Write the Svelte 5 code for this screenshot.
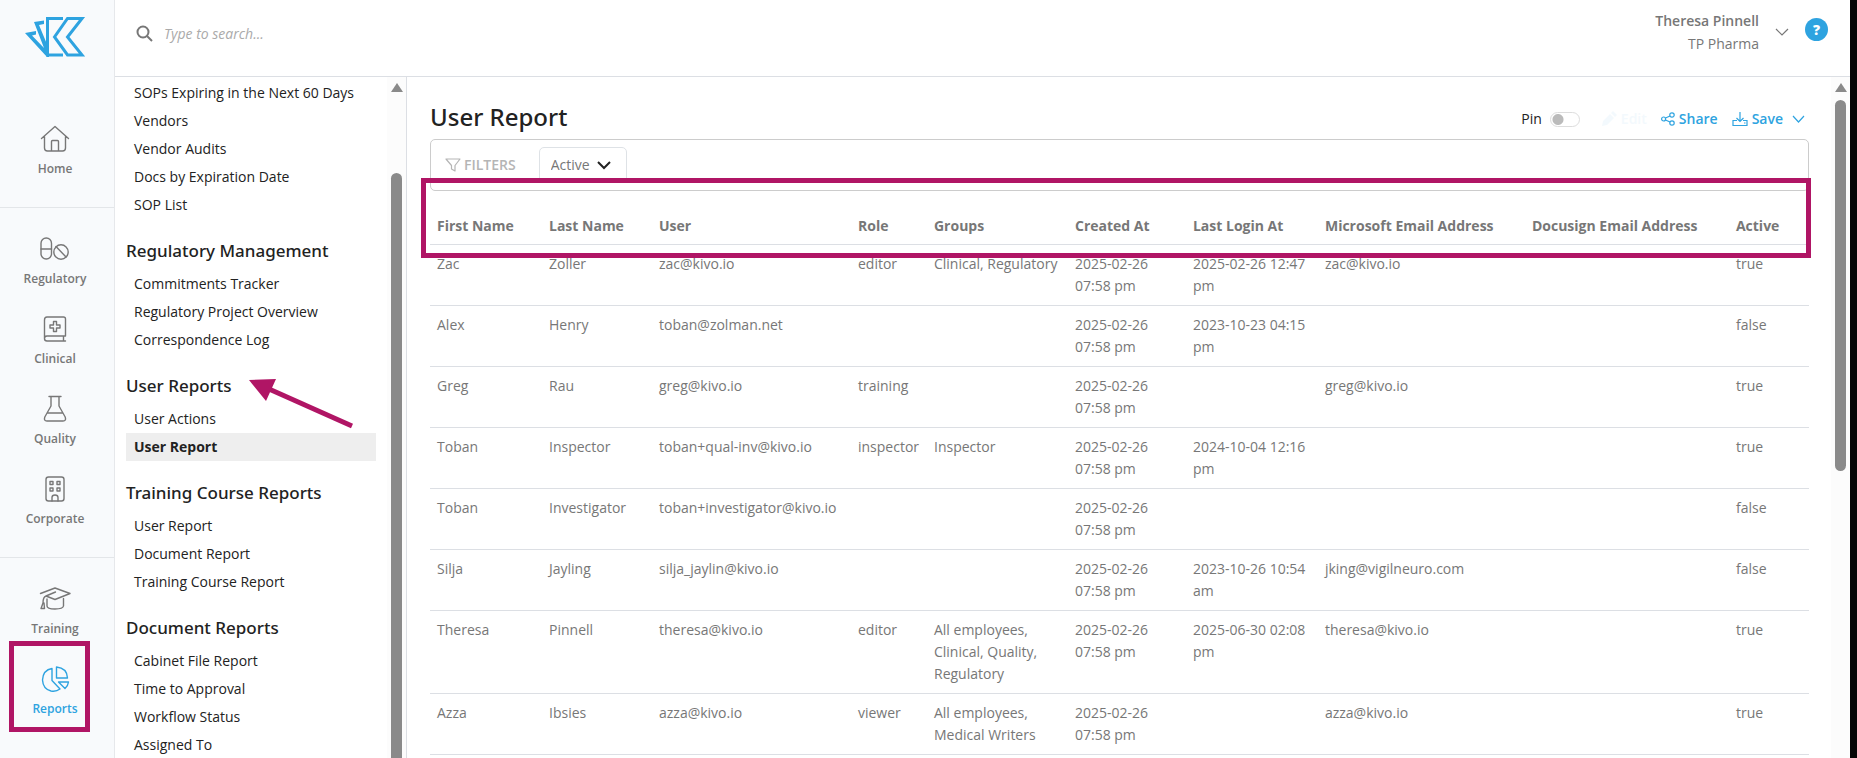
<script>
    let search = '';
    let pinned = false;
    let status = 'Active';

    const navGroups = [
        ['Home'],
        ['Regulatory', 'Clinical', 'Quality', 'Corporate'],
        ['Training', 'Reports']
    ];

    const sections = [
        {
            title: '',
            items: ['SOPs Expiring in the Next 60 Days', 'Vendors', 'Vendor Audits', 'Docs by Expiration Date', 'SOP List']
        },
        {
            title: 'Regulatory Management',
            items: ['Commitments Tracker', 'Regulatory Project Overview', 'Correspondence Log']
        },
        { title: 'User Reports', items: ['User Actions', 'User Report'] },
        {
            title: 'Training Course Reports',
            items: ['User Report', 'Document Report', 'Training Course Report']
        },
        {
            title: 'Document Reports',
            items: ['Cabinet File Report', 'Time to Approval', 'Workflow Status', 'Assigned To']
        }
    ];

    // share = relative width of the column
    const columns = [
        { label: 'First Name', share: 112 },
        { label: 'Last Name', share: 110 },
        { label: 'User', share: 199 },
        { label: 'Role', share: 76 },
        { label: 'Groups', share: 141 },
        { label: 'Created At', share: 118 },
        { label: 'Last Login At', share: 132 },
        { label: 'Microsoft Email Address', share: 207 },
        { label: 'Docusign Email Address', share: 204 },
        { label: 'Active', share: 80 }
    ];
    const total = columns.reduce((sum, c) => sum + c.share, 0);

    const created = '2025-02-26 07:58 pm';
    const rows = [
        ['Zac', 'Zoller', 'zac@kivo.io', 'editor', 'Clinical, Regulatory', created, '2025-02-26 12:47 pm', 'zac@kivo.io', '', 'true'],
        ['Alex', 'Henry', 'toban@zolman.net', '', '', created, '2023-10-23 04:15 pm', '', '', 'false'],
        ['Greg', 'Rau', 'greg@kivo.io', 'training', '', created, '', 'greg@kivo.io', '', 'true'],
        ['Toban', 'Inspector', 'toban+qual-inv@kivo.io', 'inspector', 'Inspector', created, '2024-10-04 12:16 pm', '', '', 'true'],
        ['Toban', 'Investigator', 'toban+investigator@kivo.io', '', '', created, '', '', '', 'false'],
        ['Silja', 'Jayling', 'silja_jaylin@kivo.io', '', '', created, '2023-10-26 10:54 am', 'jking@vigilneuro.com', '', 'false'],
        ['Theresa', 'Pinnell', 'theresa@kivo.io', 'editor', 'All employees, Clinical, Quality, Regulatory', created, '2025-06-30 02:08 pm', 'theresa@kivo.io', '', 'true'],
        ['Azza', 'Ibsies', 'azza@kivo.io', 'viewer', 'All employees, Medical Writers', created, '', 'azza@kivo.io', '', 'true']
    ];
</script>

<div class="app">
    <nav class="rail">
        <a class="logo" href="#home" aria-label="Kivo">
            <svg width="62" height="42" viewBox="24 16 62 42" fill="none" stroke="#2ea3e0" stroke-width="3">
                <path d="M63 18.5H47.5V55H63" />
                <path d="M67.5 18.5H82L67.5 37L82 55H67.5L54.5 37Z" />
                <path fill="#2ea3e0" stroke="none" d="M34 22L44 20.5V24L39 25L49 49V57H47L25 33L36 31V34.5L32 35.5L44 48Z" />
            </svg>
        </a>
        {#each navGroups as group}
            <div class="nav-group">
                {#each group as name}
                    <a class="nav-item" class:current={name === 'Reports'} href="#{name.toLowerCase()}">
                        <svg width="32" height="28" viewBox="0 0 32 28" fill="none" stroke="currentColor" stroke-width="1.4" stroke-linejoin="round" stroke-linecap="round">
                            {#if name === 'Home'}
                                <path d="M2.5 13.5L16 1.5L29.5 13.5M5.5 11.5V23Q5.5 26 8.5 26H23.5Q26.5 26 26.5 23V11.5M12.5 26V16.5Q12.5 15.5 13.5 15.5H18.5Q19.5 15.5 19.5 16.5V26" />
                            {:else if name === 'Regulatory'}
                                <rect x="2" y="3" width="10.5" height="21" rx="5.2" />
                                <path d="M2 14H12.5M17 11.5L27 22" />
                                <circle cx="22" cy="17" r="7.2" />
                            {:else if name === 'Clinical'}
                                <path d="M26.5 21H8Q5.5 21 5.5 23.5M26.5 26H8Q5.5 26 5.5 23.5V5Q5.5 2 8 2H24.5Q26.5 2 26.5 4V21M24.5 21V26" />
                                <path d="M14.5 6.5H17.5V10H21V13H17.5V16.5H14.5V13H11V10H14.5Z" />
                            {:else if name === 'Quality'}
                                <path d="M10 1.5H22M12 1.5V11L5.8 22Q4.5 26 8 26H24Q27.5 26 26.2 22L20 11V1.5M8.5 18H23.5" />
                            {:else if name === 'Corporate'}
                                <rect x="7" y="2" width="18" height="24" rx="2.5" />
                                <path d="M11 6.5H14V9.5H11ZM18 6.5H21V9.5H18ZM11 13H14V16H11ZM18 13H21V16H18ZM13 26V22.5Q13 20 16 20T19 22.5V26" />
                            {:else if name === 'Training'}
                                <path d="M1.5 8.5L16 3L31 8.5L16 14.5L7 11L16.5 7M7 11Q4 12 4 18L2 23.5H5.5L5 18M8 14V21Q8 24 16 24T24.5 21V13.5" />
                            {:else}
                                <path d="M13 3.5V15.5L21 24Q17 27 12 26Q4 24 3.5 15Q4 5 13 3.5Z" />
                                <path d="M17.5 2V13H28.5Q28 3 17.5 2ZM19.5 17H29.5Q29 21 26 23.5Z" />
                            {/if}
                        </svg>
                        <span>{name}</span>
                        {#if name === 'Reports'}
                            <i class="mark"></i>
                        {/if}
                    </a>
                {/each}
            </div>
        {/each}
    </nav>

    <div class="page">
        <header class="topbar">
            <label class="search">
                <svg width="18" height="18" viewBox="0 0 18 18" fill="none" stroke="#777" stroke-width="2">
                    <circle cx="7" cy="7" r="5.5" />
                    <path d="M11 11L16 16" />
                </svg>
                <input type="text" placeholder="Type to search..." aria-label="Search" bind:value={search}>
            </label>
            <div class="account">
                <div class="who">
                    <strong>Theresa Pinnell</strong>
                    <span>TP Pharma</span>
                </div>
                <button class="plain grey" aria-label="Account menu">
                    <svg width="14" height="8" viewBox="0 0 14 8" fill="none" stroke="currentColor" stroke-width="1.2"><path d="M1 1L7 7L13 1" /></svg>
                </button>
                <button class="help">?</button>
            </div>
        </header>

        <div class="body">
            <aside class="sidebar">
                <div class="list">
                    {#each sections as section}
                        {#if section.title}
                            <h2>{section.title}</h2>
                        {/if}
                        {#each section.items as item}
                            <a class:selected={section.title === 'User Reports' && item === 'User Report'} href="#report">{item}</a>
                        {/each}
                        {#if section.title === 'User Reports'}
                            <svg class="arrow" width="106" height="52" viewBox="0 0 106 52">
                                <path d="M20 10L103 47" stroke="#b01565" stroke-width="5" />
                                <path d="M0 1L27 0L17 22Z" fill="#b01565" />
                            </svg>
                        {/if}
                    {/each}
                </div>
                <div class="scroll side-scroll"><b></b><i></i></div>
            </aside>

            <main>
                <div class="title-row">
                    <h1>User Report</h1>
                    <div class="actions">
                        <label class="pin">Pin <input type="checkbox" role="switch" bind:checked={pinned}></label>
                        <button class="plain faded" disabled>
                            <svg width="16" height="16" viewBox="0 0 16 16" fill="currentColor"><path d="M1 15L2 10L9 3L13 7L6 14ZM10 2L12 0L16 4L14 6Z" /></svg>
                            Edit
                        </button>
                        <button class="plain">
                            <svg width="14" height="14" viewBox="0 0 14 14" fill="none" stroke="currentColor" stroke-width="1.2">
                                <circle cx="2.6" cy="7" r="2" /><circle cx="11" cy="3" r="2.2" /><circle cx="11" cy="11" r="2.2" />
                                <path d="M4.5 6L9 4M4.5 8L9 10" />
                            </svg>
                            Share
                        </button>
                        <button class="plain">
                            <svg width="16" height="16" viewBox="0 0 16 16" fill="none" stroke="currentColor" stroke-width="1.2">
                                <path d="M8 1V10M4.5 7L8 10.5L11.5 7M5 9.5H1V14.5H15V9.5H11M12 12H13.5" />
                            </svg>
                            Save
                            <svg class="caret" width="13" height="8" viewBox="0 0 13 8" fill="none" stroke="currentColor" stroke-width="1.2"><path d="M1 1L6.5 7L12 1" /></svg>
                        </button>
                    </div>
                </div>

                <div class="filters">
                    <span class="filters-label">
                        <svg width="16" height="14" viewBox="0 0 16 14" fill="none" stroke="currentColor" stroke-width="1.2" stroke-linejoin="round"><path d="M1 1H15L10 7.5V13L6.5 11V7.5Z" /></svg>
                        FILTERS
                    </span>
                    <span class="picker">
                        <select aria-label="Status" bind:value={status}>
                            <option>Active</option>
                            <option>Inactive</option>
                        </select>
                        <svg width="14" height="9" viewBox="0 0 14 9" fill="none" stroke="#222" stroke-width="2"><path d="M1 1L7 7L13 1" /></svg>
                    </span>
                </div>

                <div class="report">
                    <table>
                        <colgroup>
                            {#each columns as column}
                                <col style:width="{(column.share / total) * 100}%">
                            {/each}
                        </colgroup>
                        <thead>
                            <tr>
                                {#each columns as column}
                                    <th>{column.label}</th>
                                {/each}
                            </tr>
                        </thead>
                        <tbody>
                            {#each rows as row}
                                <tr>
                                    {#each row as cell}
                                        <td>{cell}</td>
                                    {/each}
                                </tr>
                            {/each}
                        </tbody>
                    </table>
                    <i class="mark"></i>
                </div>
            </main>
            <div class="scroll main-scroll"><b></b><i></i></div>
        </div>
    </div>
</div>

<style>
    :global(body) {
        overflow: hidden;
        background: #060606;
    }
    .app {
        display: flex;
        height: 100vh;
        margin-right: 7px;
        background: #fff;
        color: #222;
        font-family: "Open Sans", "Noto Sans", sans-serif;
        font-size: 14px;
        line-height: 22px;
    }
    a {
        color: inherit;
        text-decoration: none;
    }
    button, input, select {
        font: inherit;
        color: inherit;
    }

    /* left rail */
    .rail {
        flex: none;
        box-sizing: border-box;
        width: 115px;
        background: #f8fafc;
        border-right: 1px solid #e6e8eb;
        color: #777;
    }
    .logo {
        display: block;
        height: 81px;
        padding: 16px 0 0 24px;
    }
    .nav-group {
        padding: 14px 0 16px;
    }
    .nav-group + .nav-group {
        border-top: 1px solid #e3e6e9;
        padding-top: 13px;
    }
    .nav-item {
        position: relative;
        display: flex;
        flex-direction: column;
        align-items: center;
        box-sizing: border-box;
        height: 80px;
        width: 110px;
        padding-top: 14px;
        font-size: 12px;
        font-weight: 600;
        line-height: 20px;
        gap: 6px;
    }
    .current {
        color: #2ea3e0;
    }
    .mark {
        position: absolute;
        border: 5px solid #b01565;
        pointer-events: none;
    }
    .nav-item .mark {
        inset: -10px 20px -1px 9px;
    }

    /* top bar */
    .page {
        flex: 1;
        min-width: 0;
        display: flex;
        flex-direction: column;
    }
    .topbar {
        display: flex;
        justify-content: space-between;
        box-sizing: border-box;
        height: 77px;
        padding: 9px 22px 0 21px;
        border-bottom: 1px solid #dcdfe4;
    }
    .search {
        display: flex;
        align-items: center;
        height: 50px;
        gap: 10px;
    }
    .search input {
        width: 300px;
        border: 0;
        outline: 0;
        padding: 0;
    }
    .search input::placeholder {
        color: #aaa;
        font-style: italic;
    }
    .account {
        display: flex;
        align-items: flex-start;
        gap: 16px;
    }
    .who {
        display: flex;
        flex-direction: column;
        text-align: right;
        color: #777;
        line-height: 23px;
    }
    .who strong {
        font-weight: 600;
    }
    .account .plain {
        height: 46px;
    }
    .help {
        width: 23px;
        height: 23px;
        margin-top: 9px;
        padding: 0;
        border: 0;
        border-radius: 50%;
        background: #2ea3e0;
        color: #fff;
        font-weight: 800;
    }
    .plain {
        display: flex;
        align-items: center;
        gap: 4px;
        padding: 0;
        border: 0;
        background: none;
        color: #2ea3e0;
        font-weight: 600;
    }
    .grey {
        color: #777;
    }
    .faded {
        color: #f3f9fd;
    }
    .caret {
        margin-left: 5px;
    }

    /* report list */
    .body {
        flex: 1;
        min-height: 0;
        display: flex;
    }
    .sidebar {
        flex: none;
        display: flex;
        width: 291px;
        border-right: 1px solid #dcdfe4;
        overflow: hidden;
    }
    .list {
        flex: 1;
        position: relative;
        padding: 2px 11px 0;
    }
    .list a {
        display: block;
        height: 28px;
        padding-left: 8px;
        line-height: 28px;
    }
    .list .selected {
        background: #eee;
        font-weight: 700;
    }
    h1, h2 {
        margin: 0;
        font-family: "Noto Sans", "Open Sans", sans-serif;
        font-weight: 500;
    }
    h2 {
        padding: 18px 0 5px;
        font-size: 17px;
        line-height: 28px;
    }
    .arrow {
        position: absolute;
        top: 302px;
        left: 134px;
    }
    .scroll {
        flex: none;
        display: flex;
        flex-direction: column;
        align-items: center;
        box-sizing: border-box;
        width: 19px;
        padding-top: 6px;
        background: #fcfcfc;
    }
    .scroll b {
        border: 6px solid transparent;
        border-top: 0;
        border-bottom: 9px solid #8a8a8a;
    }
    .scroll i {
        width: 11px;
        border-radius: 6px;
        background: #8a8a8a;
    }
    .side-scroll i {
        height: 700px;
        flex: none;
        margin-top: 81px;
    }
    .main-scroll i {
        height: 55%;
        margin-top: 8px;
    }

    /* report */
    main {
        flex: 1;
        min-width: 0;
        padding: 22px 22px 0 23px;
        overflow: hidden;
    }
    .title-row {
        display: flex;
        align-items: center;
        justify-content: space-between;
        height: 40px;
    }
    h1 {
        padding-bottom: 4px;
        font-size: 24px;
        line-height: 32px;
    }
    .actions {
        display: flex;
        align-items: center;
        gap: 14px;
        padding-right: 4px;
    }
    .pin {
        display: flex;
        align-items: center;
        gap: 8px;
        margin-right: 7px;
    }
    .pin input {
        appearance: none;
        box-sizing: border-box;
        width: 30px;
        height: 15px;
        margin: 0;
        border: 1px solid #ddd;
        border-radius: 8px;
        background: radial-gradient(circle at 7px 50%, #bbb 5px, #fff 6px);
    }
    .pin input:checked {
        background: radial-gradient(circle at 21px 50%, #fff 5px, #2ea3e0 6px);
    }
    .filters {
        display: flex;
        box-sizing: border-box;
        height: 52px;
        padding: 7px 14px;
        border: 1px solid #ccc;
        border-radius: 5px;
        gap: 23px;
    }
    .filters-label {
        display: flex;
        align-items: center;
        gap: 3px;
        color: #b5b5b5;
        font-weight: 600;
    }
    .picker {
        display: flex;
        align-items: center;
        box-sizing: border-box;
        width: 88px;
        padding-left: 11px;
        border: 1px solid #dee2e6;
        border-radius: 5px;
        color: #777;
    }
    .picker select {
        appearance: none;
        width: 60px;
        margin-right: -14px;
        padding: 0;
        border: 0;
        background: none;
    }
    .picker svg {
        pointer-events: none;
    }
    .report {
        position: relative;
    }
    .report .mark {
        top: -13px;
        left: -9px;
        right: -2px;
        height: 70px;
    }
    table {
        width: 100%;
        table-layout: fixed;
        border-collapse: separate;
        border-spacing: 0;
        color: #777;
    }
    th, td {
        padding: 8px 7px;
        border-bottom: 1px solid #dcdfe4;
        text-align: left;
        vertical-align: top;
    }
    th {
        padding: 24px 0 7px 7px;
        font-weight: 700;
        white-space: nowrap;
    }
</style>
